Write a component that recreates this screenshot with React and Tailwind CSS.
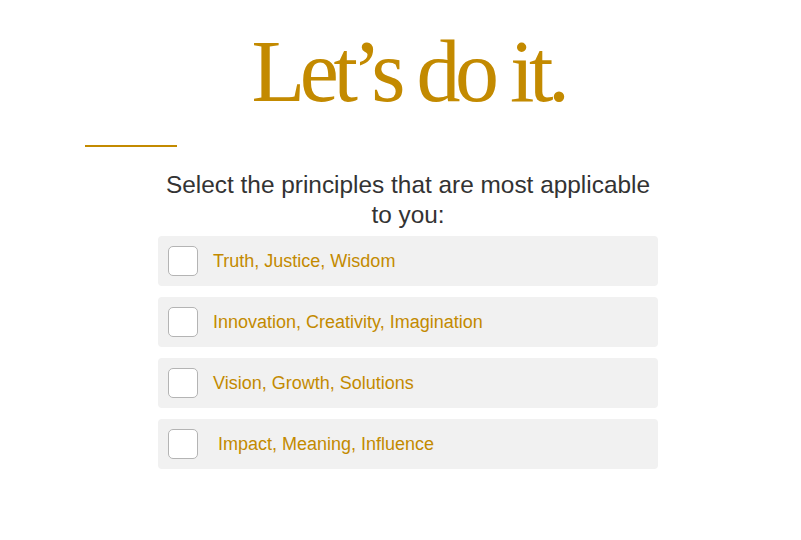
import React from "react";

const items = [
  "Truth, Justice, Wisdom",
  "Innovation, Creativity, Imagination",
  "Vision, Growth, Solutions",
  "\u00a0Impact, Meaning, Influence",
];

export default function App() {
  return (
    <div className="w-[801px] h-[540px] bg-white overflow-hidden">
      <div className="ml-[85px] w-[646px] flex flex-col">
        <h1
          className="text-center text-[88px] leading-none text-[#c38a00] tracking-[-5.5px] pt-[28px] h-[117px]"
          style={{ fontFamily: '"Liberation Serif", serif' }}
        >
          Let’s do it.
        </h1>
        <div className="w-[92px] h-[2px] bg-[#c38a00] mt-[28px]" />
        <p
          className="mx-auto w-[500px] text-center text-[24.4px] leading-[30px] text-[#333333] mt-[23px]"
          style={{ fontFamily: '"Liberation Sans", Arial, sans-serif' }}
        >
          Select the principles that are most applicable to you:
        </p>
        <div className="mx-auto w-[500px] flex flex-col gap-[11px] mt-[6px]">
          {items.map((t) => (
            <label
              key={t}
              className="h-[50px] rounded-[4px] bg-[#f1f1f1] flex items-center pl-[10px] gap-[15px]"
            >
              <span className="w-[30px] h-[30px] rounded-[5px] border border-[#b4b4b4] bg-white shrink-0" />
              <span
                className="text-[18px] text-[#c38a00]"
                style={{ fontFamily: '"Liberation Sans", Arial, sans-serif' }}
              >
                {t}
              </span>
            </label>
          ))}
        </div>
      </div>
    </div>
  );
}
